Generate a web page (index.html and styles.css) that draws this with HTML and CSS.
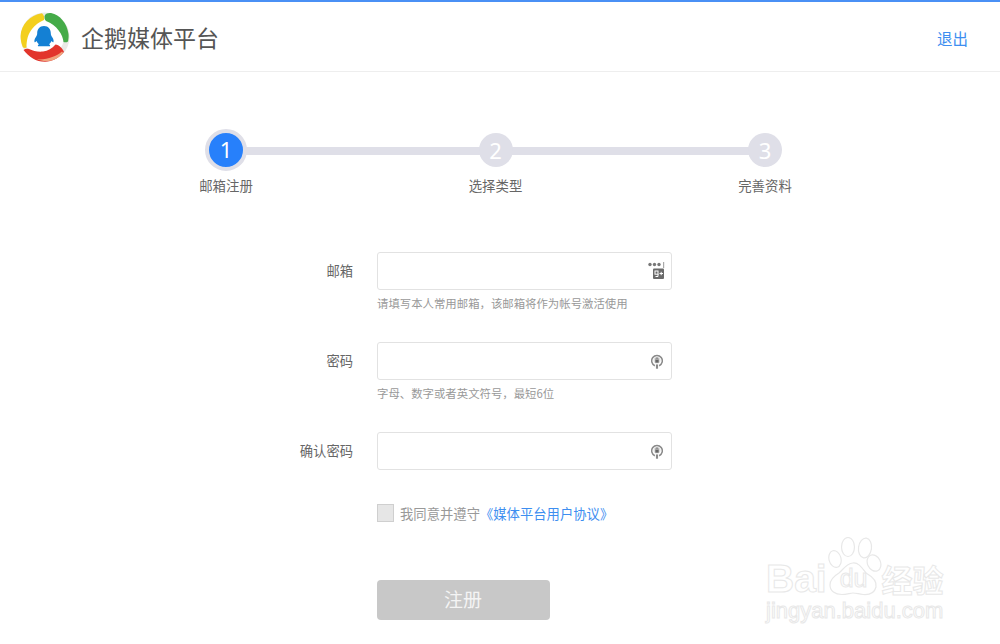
FILE: index.html
```html
<!DOCTYPE html>
<html lang="zh-CN">
<head>
<meta charset="utf-8">
<title>企鹅媒体平台</title>
<link rel="stylesheet" href="styles.css">
</head>
<body>
<header class="header">
  <div class="brand">
    <svg class="logo" width="50" height="50" viewBox="0 0 50 50">
      <circle cx="25" cy="25" r="24.500" fill="#e9e9e6"/>
      <circle cx="24" cy="25" r="20" fill="#fff"/>
      <path d="M22 1.200C10 3 1 12.500.6 24c0 4 .8 8 2.400 11.500 1.500.5 2.500.5 3.500 0C6.500 28 8 22 12 17c3-4 7-7 12-9 .8-2.500 0-5-2-6.800z" fill="#f3cf1e"/>
      <path d="M25 3C26 1.500 28 .6 31 1c9 2 16 10 17.500 21 .3 2.500 0 5-.5 7.500-1.500 1-3 1-4.500.5C43 23 37 13 26 9c-1.500-1.500-2-4-1-6z" fill="#45ab48"/>
      <path d="M3.500 38c1.500-1 3.500-1.500 5.500-1 4 2 9 3 14 2.500 5-.5 9-3 12.500-7 3.500.5 7 3.500 8.500 7.500C38 46.500 32 49.700 25 49.700c-9 0-16-4.500-21.500-11.700z" fill="#e2352c"/>
      <path d="M17 47.300c5 2 11.500 2.500 17 .5 3.500-1.300 6.500-3.800 9-7-.3-.4-.6-.8-1-1.200-6 5-15 8.500-25 7.700z" fill="#f0a37c"/>
      <path d="M24 14c-4.500 0-6.800 3.300-6.800 7.300 0 1.800-.7 2.800-1.600 4.100-.9 1.400-1.500 2.900-1.100 4.500.4.700 1.300.2 2-.8.500 1.300 1.300 2.400 2.400 3.100-1 .7-1.300 1.400-.8 2.100h11.800c.5-.7.200-1.400-.8-2.100 1.100-.7 1.900-1.800 2.400-3.100.7 1 1.600 1.500 2 .8.400-1.600-.2-3.100-1.100-4.500-.9-1.300-1.600-2.300-1.600-4.100 0-4-2.300-7.300-6.800-7.300z" fill="#1480d4"/>
    </svg>
    <h1 class="brand-name">企鹅媒体平台</h1>
  </div>
  <a class="logout" href="#">退出</a>
</header>

<main class="main">
  <ol class="steps">
    <li class="step step-active"><span class="step-dot">1</span><span class="step-label">邮箱注册</span></li>
    <li class="step"><span class="step-dot">2</span><span class="step-label">选择类型</span></li>
    <li class="step"><span class="step-dot">3</span><span class="step-label">完善资料</span></li>
  </ol>

  <form class="form">
    <div class="row">
      <label class="row-label">邮箱</label>
      <div class="field">
        <div class="input">
          <svg class="icon icon-mail" width="17" height="18" viewBox="0 0 17 18">
            <circle cx="2" cy="2.500" r="1.700" fill="#777"/><circle cx="6.500" cy="2.500" r="1.700" fill="#777"/><circle cx="11" cy="2.500" r="1.700" fill="#777"/>
            <rect x="15" y="0" width="1.200" height="6" fill="#aaa"/>
            <rect x="5" y="6.500" width="11" height="10.500" rx="1" fill="#6a6a6a"/>
            <rect x="7" y="9" width="3" height="3.200" fill="none" stroke="#fff"/>
            <path d="M10 12v2.500H7.500M11.500 11.500h3.500M13.200 9.800v3.400" fill="none" stroke="#fff"/>
          </svg>
        </div>
        <p class="hint">请填写本人常用邮箱，该邮箱将作为帐号激活使用</p>
      </div>
    </div>
    <div class="row">
      <label class="row-label">密码</label>
      <div class="field">
        <div class="input">
          <svg class="icon" width="12" height="16" viewBox="0 0 14 18">
            <path d="M4.500 14.500A6.200 6.200 0 1 1 9.500 14.500" fill="none" stroke="#8a8a8a" stroke-width="1.800"/>
            <circle cx="7" cy="8" r="4" fill="#ddd"/>
            <rect x="5" y="7.500" width="4" height="3.500" fill="#666"/>
            <path d="M5.800 7.500V6.500a1.200 1.200 0 0 1 2.400 0v1" fill="none" stroke="#666"/>
            <path d="M7 13v5" stroke="#8a8a8a" stroke-width="2.500"/>
          </svg>
        </div>
        <p class="hint">字母、数字或者英文符号，最短6位</p>
      </div>
    </div>
    <div class="row row-last">
      <label class="row-label">确认密码</label>
      <div class="field">
        <div class="input">
          <svg class="icon" width="12" height="16" viewBox="0 0 14 18">
            <path d="M4.500 14.500A6.200 6.200 0 1 1 9.500 14.500" fill="none" stroke="#8a8a8a" stroke-width="1.800"/>
            <circle cx="7" cy="8" r="4" fill="#ddd"/>
            <rect x="5" y="7.500" width="4" height="3.500" fill="#666"/>
            <path d="M5.800 7.500V6.500a1.200 1.200 0 0 1 2.400 0v1" fill="none" stroke="#666"/>
            <path d="M7 13v5" stroke="#8a8a8a" stroke-width="2.500"/>
          </svg>
        </div>
      </div>
    </div>
    <div class="agree">
      <span class="checkbox"></span>
      <span class="agree-text">我同意并遵守</span><a class="agree-link" href="#">《媒体平台用户协议》</a>
    </div>
    <button class="submit" type="button" disabled>注册</button>
  </form>
</main>

<div class="watermark">
  <svg class="paw" width="54" height="60" viewBox="0 0 54 60">
    <g fill="#fff" stroke="#e8e8e8" stroke-width="1.200">
      <ellipse cx="7" cy="22" rx="6" ry="8.500" transform="rotate(-15 7 22)"/>
      <ellipse cx="20" cy="10" rx="6.500" ry="9.500"/>
      <ellipse cx="37" cy="11" rx="6.500" ry="10" transform="rotate(8 37 11)"/>
      <ellipse cx="46" cy="26" rx="6.500" ry="8.500" transform="rotate(-25 46 26)"/>
      <path d="M25 26c6-.5 9 5 13 10 7 4 11 9 10 14-1.500 6-7 8-13 7.500-4-.4-7-1.500-10-1.500s-6 1.500-11 1.500C7 57.500 2 54 2 48c0-5 4-9 9-12 4-3 7-9.500 14-10z"/>
    </g>
  </svg>
  <div class="wm-line">
    <span class="wm-bai">Bai</span><span class="wm-du">du</span><span class="wm-cn">经验</span>
  </div>
  <div class="wm-url">jingyan.baidu.com</div>
</div>
</body>
</html>
```

FILE: styles.css
```css
* { box-sizing: border-box; }
html, body { margin: 0; padding: 0; }
body {
  width: 1000px;
  height: 644px;
  overflow: hidden;
  position: relative;
  background: #fff;
  font-family: "Noto Sans CJK SC", "Liberation Sans", sans-serif;
  color: #666;
}
.header {
  height: 72px;
  border-top: 2px solid #4a90f5;
  border-bottom: 1px solid #eeeeee;
  display: flex;
  align-items: center;
  justify-content: space-between;
  padding: 0 32px 0 20px;
}
.brand { display: flex; align-items: center; gap: 11px; }
.logo { display: block; }
.brand-name {
  margin: 0;
  font-size: 23px;
  font-weight: 400;
  line-height: 30px;
  color: #555;
}
.logout { font-size: 15.500px; color: #3d8ef0; text-decoration: none; padding-top: 2px; }
.main { display: flex; flex-direction: column; }
.steps {
  list-style: none;
  margin: 58px 0 0 199px;
  padding: 0;
  width: 593px;
  display: flex;
  justify-content: space-between;
  position: relative;
}
.steps::before {
  content: "";
  position: absolute;
  left: 27px;
  right: 27px;
  top: 17px;
  height: 8px;
  background: #dfdfe8;
}
.step {
  width: 54px;
  display: flex;
  flex-direction: column;
  align-items: center;
  position: relative;
}
.step-dot {
  width: 34px;
  height: 34px;
  margin-top: 3px;
  border-radius: 50%;
  background: #dfdfe8;
  color: #fff;
  font-family: "Noto Sans", sans-serif;
  font-size: 22px;
  line-height: 34px;
  text-align: center;
}
.step-active .step-dot {
  width: 42px;
  height: 42px;
  margin-top: -1px;
  background: #2780fb;
  border: 4px solid #dfdfe8;
  line-height: 33px;
}
.step-label {
  margin-top: 9px;
  margin-bottom: 1px;
  font-size: 13.400px;
  line-height: 18px;
  color: #666;
  white-space: nowrap;
}
.step-active .step-label { margin-top: 5px; }
.form { margin-top: 57px; padding-left: 377px; }
.row { height: 90px; display: flex; margin-left: -100px; }
.row-last { height: 72px; }
.row-label {
  width: 76px;
  height: 38px;
  line-height: 38px;
  font-size: 13.300px;
  text-align: right;
  color: #666;
  margin-right: 24px;
  white-space: nowrap;
}
.field { width: 295px; }
.input {
  height: 38px;
  border: 1px solid #e2e2e2;
  border-radius: 3px;
  background: #fff;
  display: flex;
  align-items: center;
  justify-content: flex-end;
  padding-right: 8px;
}
.input .icon-mail { margin-right: -2px; }
.hint {
  margin: 5px 0 0;
  font-size: 11.400px;
  line-height: 17px;
  color: #999;
}
.agree {
  height: 18px;
  display: flex;
  align-items: center;
  font-size: 13.330px;
}
.checkbox {
  width: 17px;
  height: 18px;
  border: 1px solid #cfcfcf;
  background: #e6e6e6;
  margin-right: 6px;
}
.agree-text { color: #999; }
.agree-link { color: #3d8ef0; text-decoration: none; }
.submit {
  display: block;
  margin-top: 58px;
  width: 173px;
  height: 40px;
  border: 0;
  border-radius: 4px;
  background: #c8c8c8;
  color: #f4f4f4;
  font-family: inherit;
  font-size: 19px;
  padding: 0 1px 3px 0;
}
.watermark {
  position: absolute;
  left: 766px;
  top: 537px;
  width: 190px;
  height: 90px;
  font-family: "Liberation Sans", sans-serif;
  color: #fff;
}
.paw { position: absolute; left: 62px; top: 0; }
.wm-line {
  position: absolute;
  left: 0;
  top: 19px;
  display: flex;
  align-items: baseline;
  white-space: nowrap;
  -webkit-text-stroke: 1px #e8e8e8;
}
.wm-bai { font-size: 39px; font-weight: 700; letter-spacing: 0; }
.wm-du { font-size: 25px; margin-left: 13px; transform: translateY(-5px); }
.wm-cn {
  font-family: "Noto Sans CJK SC", sans-serif;
  font-size: 31px;
  margin-left: 14px;
  font-weight: 700;
}
.wm-url {
  position: absolute;
  left: 0;
  top: 61px;
  font-size: 22px;
  white-space: nowrap;
  -webkit-text-stroke: 1px #e8e8e8;
}
```
